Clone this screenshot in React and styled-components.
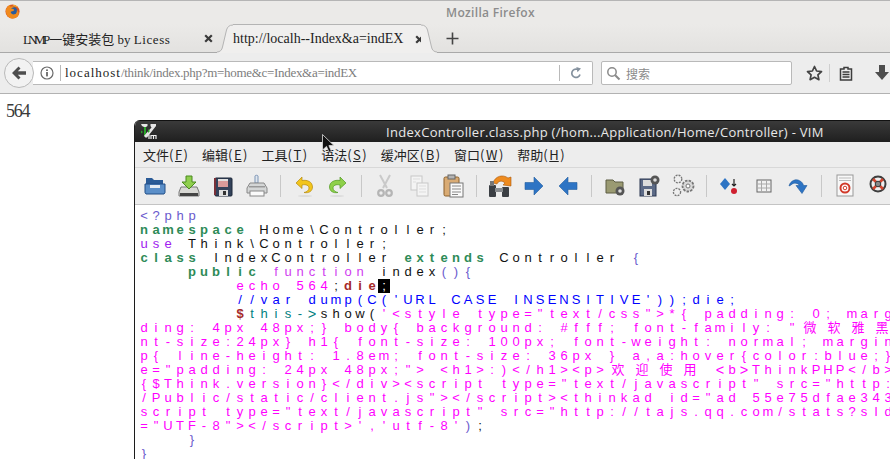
import React from "react";
import styled, { createGlobalStyle } from "styled-components";

const GlobalStyle = createGlobalStyle`
  html, body { margin: 0; padding: 0; background: #fff; }
  body { width: 890px; height: 459px; overflow: hidden; }
`;

const colors = {
  slate: "#6a5acd",
  green: "#2e8b57",
  purple: "#a020f0",
  black: "#111",
  pink: "#ff00ff",
  fn: "#d040f0",
  brown: "#a52a2a",
  blue: "#0000ff",
  teal: "#008080",
};

// [colour, text, bold, big glyph]
const code = [
  [["slate", "<?php"]],
  [["green", "namespace", 1], ["black", " Home\\Controller;"]],
  [["purple", "use"], ["black", " Think\\Controller;"]],
  [["green", "class", 1], ["black", " IndexController "], ["green", "extends", 1], ["black", " Controller "], ["slate", "{"]],
  [["black", "    "], ["green", "public", 1], ["black", " "], ["fn", "function"], ["black", " index"], ["slate", "(){"]],
  [["black", "        "], ["pink", "echo 564"], ["black", ";"], ["brown", "die", 1], ["cursor", ";"]],
  [["black", "        "], ["blue", "//var dump(C('URL CASE INSENSITIVE'));die;"]],
  [["black", "        "], ["brown", "$", 1], ["teal", "this-"], ["teal", ">", 0, 1], ["black", "show("], ["pink", "'<style type=\"text/css\">*{ padding: 0; marg"]],
  [["pink", "ding: 4px 48px;} body{ background: #fff; font-family: \"微软雅黑"]],
  [["pink", "nt-size:24px} h1{ font-size: 100px; font-weight: normal; margin"]],
  [["pink", "p{ line-height: 1.8em; font-size: 36px } a,a:hover{color:blue;}"]],
  [["pink", "e=\"padding: 24px 48px;\"> <h1>:)</h1><p>欢迎使用 "], ["pink", "<", 0, 1], ["pink", "b"], ["pink", ">", 0, 1], ["pink", "ThinkPHP</b>"]],
  [["pink", "{$Think.version}</div><script type=\"text/javascript\" src=\"http:"]],
  [["pink", "/Public/static/client.js\"></script><thinkad id=\"ad 55e75dfae343"]],
  [["pink", "script type=\"text/javascript\" src=\"http://tajs.qq.com/stats?sId"]],
  [["pink", "=\"UTF-8\"></script>','utf-8'"], ["slate", ")"], ["black", ";"]],
  [["black", "    "], ["slate", "}"]],
  [["slate", "}"]],
];

const menus = [
  ["文件", "F"],
  ["编辑", "E"],
  ["工具", "T"],
  ["语法", "S"],
  ["缓冲区", "B"],
  ["窗口", "W"],
  ["帮助", "H"],
];

const isWide = c => c.charCodeAt(0) > 0x2e80;

const FirefoxLogo = () => (
  <svg width="15" height="15" viewBox="0 0 16 16">
    <circle cx="8" cy="8" r="7.5" fill="#d9541e" />
    <circle cx="8.4" cy="7.6" r="4.8" fill="#2a5c9e" />
    <path d="M1 6C2 3 4 1.2 6 .8 5.4 1.6 5.4 2.4 5.8 3 7 2 9 2.2 10.5 3.4 8.5 3.2 7 4 6.6 5.2 8 5 9.6 5.6 9.8 6.6 8.6 8 6.8 7.6 6 8.4 6.4 10 8 11.4 10 11 12 10.6 13 8.6 12.6 6 14.2 7.4 15.4 10 14.4 12 13 14.6 10 15.8 7.4 15.4 3.4 14.8.6 11 1 6Z" fill="#f08a1d" />
    <path d="M8 1C10.6.8 13 2 14.4 4.4 13 3 11.6 2.6 10.4 2.6Z" fill="#f7c531" />
  </svg>
);

const BackArrow = () => (
  <svg width="16" height="14" viewBox="0 0 16 14">
    <path d="M7.5 0.5 1 7l6.5 6.5 2-2L6.8 8.7H15V5.3H6.8l2.7-2.8Z" fill="#4d4d4d" />
  </svg>
);

const InfoIcon = () => (
  <svg width="14" height="14" viewBox="0 0 14 14">
    <circle cx="7" cy="7" r="6" fill="none" stroke="#6a6a6a" strokeWidth="1.2" />
    <rect x="6.2" y="6" width="1.6" height="4.4" fill="#555" />
    <rect x="6.2" y="3.4" width="1.6" height="1.6" fill="#555" />
  </svg>
);

const ReloadIcon = () => (
  <svg width="12" height="12" viewBox="0 0 12 12">
    <path d="M10 7.5A4.2 4.2 0 1 1 7.4 2.3" fill="none" stroke="#84919e" strokeWidth="1.7" />
    <path d="M6.4 0 11 1.6 7.4 5.2Z" fill="#84919e" />
  </svg>
);

const SearchIcon = () => (
  <svg width="15" height="15" viewBox="0 0 15 15">
    <circle cx="6" cy="6" r="4.2" fill="none" stroke="#8a8a8a" strokeWidth="1.5" />
    <path d="M9.2 9.2 13.5 13.5" stroke="#8a8a8a" strokeWidth="2" />
  </svg>
);

const StarIcon = () => (
  <svg width="17" height="16" viewBox="0 0 17 16">
    <path d="M8.5 1.5 10.6 6l4.9.6-3.6 3.3 1 4.8-4.4-2.4-4.4 2.4 1-4.8L1.5 6.6 6.4 6Z" fill="none" stroke="#444" strokeWidth="1.7" strokeLinejoin="round" />
  </svg>
);

const ReadingIcon = () => (
  <svg width="14" height="15" viewBox="0 0 14 15">
    <path d="M5 1.5h4v1.5h3.5v11h-11V3H5Z" fill="none" stroke="#3d3d3d" strokeWidth="1.5" />
    <path d="M3.5 6h7M3.5 8.5h7M3.5 11h7" stroke="#3d3d3d" strokeWidth="1.3" />
  </svg>
);

const DownloadIcon = () => (
  <svg width="14" height="16" viewBox="0 0 14 16">
    <path d="M4 0h6v7h4l-7 8-7-8h4Z" fill="#4d4d4d" />
  </svg>
);

const CloseGlyph = () => (
  <svg width="9" height="9" viewBox="0 0 9 9">
    <path d="M1.2 1.2 7.8 7.8M7.8 1.2 1.2 7.8" stroke="#3a3a3a" strokeWidth="2.2" />
  </svg>
);

const PlusIcon = () => (
  <svg width="13" height="13" viewBox="0 0 13 13">
    <path d="M6.5.5v12M.5 6.5h12" stroke="#444" strokeWidth="1.6" />
  </svg>
);

const TabEdge = ({ flip }) => (
  <svg width="16" height="29" viewBox="0 0 16 29" style={flip ? { transform: "scaleX(-1)" } : undefined}>
    <path d="M0 29H16V1C12 1 10.5 3 9.5 6L5.5 23C5 26 3 28 0 28Z" fill="#f0efee" />
    <path d="M0 28C3 28 5 26 5.5 23L9.5 6C10.5 3 12 1 16 1" fill="none" stroke="#b4b4b4" />
  </svg>
);

const VimLogo = () => (
  <svg width="16" height="17" viewBox="0 0 16 17">
    <path d="M0 1h6.500v2L5 4v6.500L10.500 4.500 9.500 3V1H15v2L6 14.500H4.500L3 13V4L1 3Z" fill="#e6e6e6" />
    <path d="M3 4h2v6.500L3 13Z" fill="#2aa52a" />
    <path d="M7 6 9 8 7 10ZM0 7.500l2 1.500-2 1.500Z" fill="#2aa52a" />
    <path d="M8 11.500v4.500M10 12v4M10 12.500h5v3.500M12.500 12.500V16" fill="none" stroke="#f0f0f0" strokeWidth="1.200" />
  </svg>
);

const MouseCursor = () => (
  <svg width="13" height="19" viewBox="0 0 13 19">
    <path d="M.5.5V16l4-3.6 2.6 6 2.4-1-2.6-5.8H12Z" fill="#111" stroke="#ddd" strokeWidth=".8" />
  </svg>
);

const Ic = ({ children }) => (
  <svg width="26" height="26" viewBox="0 0 26 26">
    {children}
  </svg>
);

const tools = [
  <Ic>
    <path d="M4 5h6l2 2h9v4H4Z" fill="#2a5b97" />
    <path d="M3 11h20v8.5l-1 1.5H4l-1-1.5Z" fill="#5b8fc9" stroke="#234f87" />
    <rect x="8" y="12" width="10" height="3" fill="#e6ecf3" />
  </Ic>,
  <Ic>
    <path d="M5 14h16l2 5v4H3v-4Z" fill="#d8d8d4" stroke="#777" />
    <rect x="4" y="20" width="18" height="3" fill="#444" />
    <path d="M10 3h6v6h4l-7 7-7-7h4Z" fill="#8fce4e" stroke="#4a8a1f" />
  </Ic>,
  <Ic>
    <rect x="5" y="5" width="17" height="18" rx="1" fill="#33425a" stroke="#1d2738" />
    <rect x="4" y="5" width="2" height="17" fill="#7a3038" />
    <rect x="8" y="6" width="10" height="8" fill="#d89a9a" />
    <rect x="8" y="6" width="10" height="2" fill="#e0e0e0" />
    <rect x="9" y="17" width="9" height="6" fill="#dfdfdf" />
    <rect x="13" y="18" width="3" height="4" fill="#333" />
  </Ic>,
  <Ic>
    <path d="M11 3c0-1 3-1 3 0v7h-3Z" fill="#dfe6ee" stroke="#7d95b5" />
    <path d="M6 10h14l3 5v5H3v-5Z" fill="#d4d6d6" stroke="#888" />
    <rect x="6" y="18" width="14" height="5" fill="#fafafa" stroke="#888" />
    <rect x="5" y="13" width="16" height="1.5" fill="#999" />
  </Ic>,
  <Ic>
    <path d="M11 4 5 10l6 5.5V12c4-1 7 .5 7 3 0 2.500-2.500 4-5 4.500 5 1 8.500-1.500 8.500-5.500C21.500 9 16.500 6.500 11 7.500Z" fill="#f2c51c" stroke="#b48a10" strokeWidth=".7" />
    <ellipse cx="14" cy="23" rx="7" ry="1.1" fill="#dcdcdc" />
  </Ic>,
  <Ic>
    <path d="M15 4l6 6-6 5.500V12c-4-1-7 .5-7 3 0 2.500 2.500 4 5 4.500-5 1-8.500-1.500-8.500-5.500C4.500 9 9.500 6.500 15 7.500Z" fill="#8ed04a" stroke="#4f9a20" strokeWidth=".7" />
    <ellipse cx="12" cy="23" rx="7" ry="1.1" fill="#dcdcdc" />
  </Ic>,
  <Ic>
    <path d="M8 2l7 13M18 2l-7 13" stroke="#c9c9c9" strokeWidth="2" />
    <circle cx="9" cy="20" r="2.800" fill="none" stroke="#b5b5b5" strokeWidth="2.200" />
    <circle cx="17" cy="20" r="2.800" fill="none" stroke="#b5b5b5" strokeWidth="2.200" />
  </Ic>,
  <Ic>
    <rect x="5" y="3" width="11" height="14" fill="#f4f4f4" stroke="#c8c8c8" />
    <rect x="11" y="10" width="11" height="13" fill="#f4f4f4" stroke="#c8c8c8" />
    <path d="M7 6h7M7 9h3M13 13h7M13 16h7M13 19h7" stroke="#ddd" />
  </Ic>,
  <Ic>
    <rect x="4" y="4" width="15" height="19" rx="1.500" fill="#d9ab74" stroke="#8a5f2a" />
    <rect x="8" y="2" width="7" height="4" fill="#b4b4b4" stroke="#666" />
    <rect x="10" y="10" width="13" height="14" fill="#fafafa" stroke="#777" />
    <path d="M12 13h9M12 16h9M12 19h9M12 21.500h6" stroke="#888" />
  </Ic>,
  <Ic>
    <path d="M6 10c2-7 10-9 15-5l3-1v9l-8-1 2-2c-3-3-7-2-8 1Z" fill="#ee8b1f" stroke="#a9590d" strokeWidth=".6" />
    <rect x="2" y="12" width="7" height="12" rx="1" fill="#3b3f44" />
    <rect x="15" y="14" width="7" height="10" rx="1" fill="#3b3f44" />
    <rect x="8" y="15" width="8" height="4" fill="#8a8d90" />
    <rect x="3" y="8" width="4" height="5" fill="#777" />
  </Ic>,
  <Ic>
    <path d="M4 9.500h9V4l9 9-9 9v-5.500H4Z" fill="#2d74c4" stroke="#255f9f" strokeWidth=".6" />
  </Ic>,
  <Ic>
    <path d="M22 9.500h-9V4l-9 9 9 9v-5.500h9Z" fill="#2d74c4" stroke="#255f9f" strokeWidth=".6" />
  </Ic>,
  <Ic>
    <path d="M4 7h7l2 2h8v11H4Z" fill="#9a9a72" stroke="#5c5c42" />
    <circle cx="18" cy="18" r="4.500" fill="#555" />
    <circle cx="18" cy="18" r="1.800" fill="#ddd" />
  </Ic>,
  <Ic>
    <rect x="4" y="6" width="16" height="17" fill="#5c6a86" stroke="#2b3650" />
    <rect x="7" y="7" width="9" height="6" fill="#dcdcdc" />
    <rect x="8" y="16" width="8" height="7" fill="#ddd" />
    <rect x="11" y="18" width="3" height="4" fill="#333" />
    <circle cx="19" cy="7" r="4.500" fill="#555" />
    <circle cx="19" cy="7" r="1.800" fill="#ddd" />
  </Ic>,
  <Ic>
    <circle cx="8" cy="6" r="3.800" fill="#eee" stroke="#777" strokeWidth="1.300" strokeDasharray="2 1" />
    <circle cx="7" cy="19" r="3.600" fill="#eee" stroke="#777" strokeWidth="1.300" strokeDasharray="2 1" />
    <circle cx="18" cy="13" r="5.500" fill="#d8d8d8" stroke="#777" strokeWidth="1.800" strokeDasharray="2.500 1.200" />
    <circle cx="18" cy="13" r="2" fill="#fff" stroke="#777" />
  </Ic>,
  <Ic>
    <path d="M8 5l5 6-5 6-5-6Z" fill="#2d74c4" />
    <path d="M17 6v7M15 11l2 2 2-2" fill="none" stroke="#222" strokeWidth="1.200" />
    <circle cx="17" cy="18" r="3" fill="#cf2030" />
  </Ic>,
  <Ic>
    <rect x="6" y="7" width="14" height="12" fill="#f2f2f2" stroke="#666" />
    <path d="M6 11h14M6 15h14M10.500 7v12M15.500 7v12" stroke="#aaa" />
  </Ic>,
  <Ic>
    <path d="M4 13C5 8 11 5 15 8c2 1 3 2.500 3.500 4.500H22l-5 8-6-8h3.500c-1-2.500-6-3.500-8.500-.5Z" fill="#2d74c4" stroke="#205a9c" strokeWidth=".6" />
  </Ic>,
  <Ic>
    <rect x="5" y="2" width="16" height="21" fill="#f8f8f8" stroke="#999" />
    <path d="M7 5h12M7 7.500h12" stroke="#bbb" />
    <circle cx="13" cy="15" r="4.500" fill="#fff" stroke="#d13a2a" strokeWidth="2" />
    <circle cx="13" cy="15" r="1.800" fill="#fff" stroke="#d13a2a" />
  </Ic>,
  <Ic>
    <circle cx="12" cy="11" r="7.500" fill="#eee" stroke="#3e3e3e" strokeWidth="2" />
    <path d="M7 6l3 3M17 6l-3 3M7 16l3-3M17 16l-3-3" stroke="#d2452f" strokeWidth="2.600" />
    <circle cx="12" cy="11" r="2.800" fill="#888" stroke="#333" />
  </Ic>,
];

const groups = [[0, 4], [4, 6], [6, 9], [9, 12], [12, 15], [15, 18], [18, 20]];

export default function App() {
  return (
    <Page>
      <GlobalStyle />
      <TitleBar>
        <LogoSlot>
          <FirefoxLogo />
        </LogoSlot>
        <TitleText>Mozilla Firefox</TitleText>
      </TitleBar>

      <TabStrip>
        <Tab>
          <TabTitle>
            <Squeezed>LNMP</Squeezed>一键安装包 by <Stretched>Licess</Stretched>
          </TabTitle>
          <CloseGlyph />
        </Tab>
        <ActiveTab>
          <TabEdge />
          <ActiveBody>
            <ActiveTitle>http://localh--Index&amp;a=indEX</ActiveTitle>
            <ActiveClose>
              <CloseGlyph />
            </ActiveClose>
          </ActiveBody>
          <TabEdge flip />
        </ActiveTab>
        <NewTab>
          <PlusIcon />
        </NewTab>
      </TabStrip>

      <NavBar>
        <BackButton>
          <BackArrow />
        </BackButton>
        <UrlBar>
          <InfoIcon />
          <UrlDivider />
          <UrlText>
            <UrlHost>localhost</UrlHost>/think/index.php?m=home&amp;c=Index&amp;a=indEX
          </UrlText>
          <ReloadSlot>
            <ReloadIcon />
          </ReloadSlot>
        </UrlBar>
        <SearchBar>
          <SearchIcon />
          <SearchText>搜索</SearchText>
        </SearchBar>
        <NavIcons>
          <StarIcon />
          <NavDivider />
          <ReadingIcon />
          <DownloadSlot>
            <DownloadIcon />
          </DownloadSlot>
        </NavIcons>
      </NavBar>

      <Content>564</Content>

      <VimWindow>
        <VimTitle>
          <VimLogoSlot>
            <VimLogo />
          </VimLogoSlot>
          <VimTitleText>IndexController.class.php (/hom...Application/Home/Controller) - VIM</VimTitleText>
        </VimTitle>
        <MenuBar>
          {menus.map(([label, key]) => (
            <MenuItem key={key}>
              {label}(<MenuKey>{key}</MenuKey>)
            </MenuItem>
          ))}
        </MenuBar>
        <Toolbar>
          {groups.map(([from, to], i) => (
            <React.Fragment key={from}>
              {i > 0 && <ToolSeparator />}
              {tools.slice(from, to).map((icon, j) => (
                <ToolButton key={j}>{icon}</ToolButton>
              ))}
            </React.Fragment>
          ))}
        </Toolbar>
        <Editor>
          {code.map((line, i) => (
            <CodeLine key={i}>
              {line.map(([kind, text, bold, big], j) =>
                Array.from(text).map((c, k) => (
                  <Cell key={j + "-" + k} $kind={kind} $bold={bold} $big={big} $wide={isWide(c)}>
                    {c}
                  </Cell>
                ))
              )}
            </CodeLine>
          ))}
        </Editor>
      </VimWindow>

      <CursorSlot>
        <MouseCursor />
      </CursorSlot>
    </Page>
  );
}

const Page = styled.div`
  position: relative;
  width: 890px;
  height: 459px;
  overflow: hidden;
  display: flex;
  flex-direction: column;
  background: #fff;
`;
const TitleBar = styled.div`
  height: 23px;
  flex: none;
  border-top: 1px solid #b5b5b5;
  background: #ebeae8;
  display: flex;
  align-items: center;
  justify-content: center;
  position: relative;
`;
const LogoSlot = styled.div`
  position: absolute;
  left: 5px;
  top: 3px;
  line-height: 0;
`;
const TitleText = styled.div`
  font: 600 12px "Open Sans", sans-serif;
  color: #8c8c8c;
  padding-left: 91px;
  letter-spacing: 0.3px;
`;
const TabStrip = styled.div`
  height: 28px;
  flex: none;
  display: flex;
  background: linear-gradient(#ebeae8, #e3e2e0);
  border-bottom: 1px solid #a9a9a9;
`;
const Tab = styled.div`
  width: 217px;
  display: flex;
  align-items: center;
  padding: 0 4px 0 23px;
  box-sizing: border-box;
  flex: none;
`;
const TabTitle = styled.div`
  flex: 1;
  font: 13px "Liberation Serif", "Noto Sans CJK SC", serif;
  color: #222;
  white-space: nowrap;
`;
const Squeezed = styled.span`
  letter-spacing: -3px;
  margin-right: 2px;
`;
const Stretched = styled.span`
  letter-spacing: 0.6px;
`;
const ActiveTab = styled.div`
  display: flex;
  flex: none;
  height: 29px;
  position: relative;
  z-index: 1;
`;
const ActiveBody = styled.div`
  width: 188px;
  display: flex;
  align-items: center;
  background: #f0efee;
  border-top: 1px solid #b4b4b4;
  box-sizing: border-box;
  height: 29px;
`;
const ActiveTitle = styled.div`
  flex: 1;
  font: 14px "Liberation Serif", serif;
  color: #222;
  white-space: nowrap;
`;
const ActiveClose = styled.div`
  margin-right: -3px;
  line-height: 0;
`;
const NewTab = styled.div`
  display: flex;
  align-items: center;
  margin-left: 9px;
  line-height: 0;
`;
const NavBar = styled.div`
  height: 40px;
  flex: none;
  background: #ededed;
  border-bottom: 1px solid #b2b2b2;
  display: flex;
  align-items: center;
  position: relative;
`;
const BackButton = styled.div`
  width: 30px;
  height: 30px;
  margin-left: 4px;
  border-radius: 50%;
  background: #f2f2f2;
  border: 1px solid #b9b9b9;
  box-sizing: border-box;
  display: flex;
  align-items: center;
  justify-content: center;
  position: relative;
  z-index: 1;
  flex: none;
`;
const UrlBar = styled.div`
  width: 560px;
  height: 24px;
  margin-left: -1px;
  box-sizing: border-box;
  background: #fff;
  border: 1px solid #b9b9b9;
  border-left: none;
  border-radius: 0 2px 2px 0;
  display: flex;
  align-items: center;
  padding-left: 7px;
  flex: none;
`;
const UrlDivider = styled.div`
  width: 1px;
  height: 16px;
  background: #b9b9b9;
  margin: 0 4px 0 6px;
`;
const UrlText = styled.div`
  flex: 1;
  font: 13px "Liberation Serif", serif;
  letter-spacing: -0.3px;
  color: #7d7d7d;
  white-space: nowrap;
`;
const UrlHost = styled.span`
  color: #222;
  letter-spacing: 1px;
`;
const ReloadSlot = styled.div`
  width: 32px;
  height: 16px;
  border-left: 1px solid #b9b9b9;
  display: flex;
  align-items: center;
  justify-content: center;
`;
const SearchBar = styled.div`
  width: 191px;
  height: 24px;
  margin-left: 8px;
  box-sizing: border-box;
  background: #fff;
  border: 1px solid #b9b9b9;
  border-radius: 2px;
  display: flex;
  align-items: center;
  padding-left: 4px;
  flex: none;
`;
const SearchText = styled.div`
  font: 12px "Noto Sans CJK SC", sans-serif;
  color: #8a8a8a;
  margin-left: 5px;
`;
const NavIcons = styled.div`
  display: flex;
  align-items: center;
  margin-left: 14px;
  flex: none;
`;
const NavDivider = styled.div`
  width: 1px;
  height: 18px;
  background: #cfcfcf;
  margin: 0 9px 0 6px;
`;
const DownloadSlot = styled.div`
  margin-left: 22px;
  line-height: 0;
`;
const Content = styled.div`
  font: 18px "Liberation Serif", serif;
  letter-spacing: -1.300px;
  color: #3a3a3a;
  padding: 7px 6px;
`;
const VimWindow = styled.div`
  position: absolute;
  left: 134px;
  top: 120px;
  width: 800px;
  height: 360px;
  border-left: 1px solid #1c1c1c;
  border-radius: 6px 0 0 0;
  overflow: hidden;
  display: flex;
  flex-direction: column;
  background: #fff;
`;
const VimTitle = styled.div`
  height: 22px;
  flex: none;
  background: linear-gradient(#3a3a3a, #1f1f1f);
  border-top: 1px solid #111;
  box-sizing: border-box;
  display: flex;
  align-items: center;
`;
const VimLogoSlot = styled.div`
  margin-left: 6px;
  width: 16px;
  line-height: 0;
  flex: none;
`;
const VimTitleText = styled.div`
  margin-left: 229px;
  font: 500 13px "Open Sans", sans-serif;
  letter-spacing: 0.3px;
  color: #e8e8e8;
  white-space: nowrap;
`;
const MenuBar = styled.div`
  height: 26px;
  flex: none;
  background: #ededed;
  border-bottom: 1px solid #d8d8d8;
  box-sizing: border-box;
  display: flex;
  align-items: center;
  padding-left: 8px;
  gap: 14px;
`;
const MenuItem = styled.div`
  font: 13px "Noto Sans CJK SC", sans-serif;
  color: #222;
  white-space: nowrap;
`;
const MenuKey = styled.u`
  margin: 0 1.500px;
`;
const Toolbar = styled.div`
  height: 37px;
  flex: none;
  background: #ededed;
  border-bottom: 1px solid #c4c4c4;
  box-sizing: border-box;
  display: flex;
  align-items: center;
  padding-left: 3px;
`;
const ToolButton = styled.div`
  width: 34px;
  height: 26px;
  flex: none;
  display: flex;
  justify-content: center;
  line-height: 0;
`;
const ToolSeparator = styled.div`
  width: 1px;
  height: 22px;
  margin: 0 6px;
  background: #c8c8c8;
  flex: none;
`;
const Editor = styled.div`
  flex: 1;
  padding: 4px 0 0 3px;
  overflow: hidden;
`;
const CodeLine = styled.div`
  height: 14px;
  line-height: 14px;
  white-space: pre;
  font-size: 0;
`;
const Cell = styled.span`
  display: inline-block;
  width: ${p => (p.$wide ? "24px" : "12px")};
  height: 14px;
  vertical-align: top;
  text-align: center;
  white-space: pre;
  font: ${p => (p.$bold ? 700 : 400)} ${p => (p.$big ? "14.5px" : "13px")}/14px "Liberation Sans", "Noto Sans CJK SC", sans-serif;
  color: ${p => (p.$kind === "cursor" ? "#fff" : colors[p.$kind])};
  background: ${p => (p.$kind === "cursor" ? "#000" : "transparent")};
`;
const CursorSlot = styled.div`
  position: absolute;
  left: 322px;
  top: 134px;
  line-height: 0;
`;
